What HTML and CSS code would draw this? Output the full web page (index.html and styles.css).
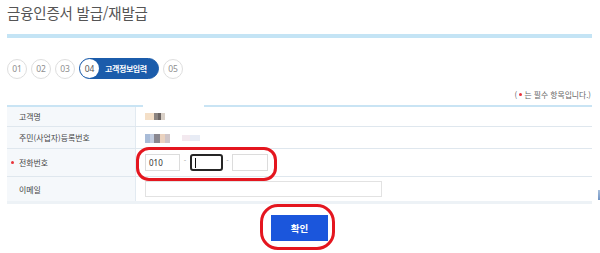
FILE: index.html
```html
<!DOCTYPE html>
<html lang="ko">
<head>
<meta charset="utf-8">
<title>금융인증서 발급/재발급</title>
<link rel="stylesheet" href="styles.css">
</head>
<body>
<div class="page">
  <h1 class="title">금융인증서 발급/재발급</h1>
  <div class="bar"></div>

  <ol class="steps">
    <li class="step">01</li>
    <li class="step">02</li>
    <li class="step">03</li>
    <li class="step current"><span class="num">04</span><span class="name">고객정보입력</span></li>
    <li class="step">05</li>
  </ol>

  <p class="note">( <span class="note-dot"></span> 는 필수 항목입니다.)</p>

  <div class="form">
    <div class="mask"></div>
    <div class="row r1">
      <div class="label">고객명</div>
      <div class="value">
        <span class="blur">
          <i class="px" style="width:9px;background:#f4dfc7"></i><i class="px" style="width:4px;background:#8b8481"></i><i class="px" style="width:3px;background:#6c6563"></i><i class="px" style="width:4px;background:#d9d0c7"></i>
        </span>
      </div>
    </div>
    <div class="row r2">
      <div class="label">주민(사업자)등록번호</div>
      <div class="value">
        <span class="blur tall">
          <i class="px" style="width:5px;background:#a9bcd8"></i><i class="px" style="width:4px;background:#c3cde0"></i><i class="px" style="width:6px;background:#8a878f"></i><i class="px" style="width:5px;background:#ead2bf"></i><i class="px" style="width:5px;background:#cfc5c8"></i>
        </span>
        <span class="blur faint">
          <i class="px" style="width:8px;background:#f2e7ee"></i><i class="px" style="width:10px;background:#e6ebf4"></i>
        </span>
      </div>
    </div>
    <div class="row r3">
      <div class="label"><span class="req"></span>전화번호</div>
      <div class="value">
        <div class="phone">
          <div class="field f1">010</div>
          <span class="dash">-</span>
          <div class="field f2 focus"><span class="caret"></span></div>
          <span class="dash">-</span>
          <div class="field f3"></div>
          <span class="mark phone-mark"></span>
        </div>
      </div>
    </div>
    <div class="row r4">
      <div class="label">이메일</div>
      <div class="value">
        <div class="field email"></div>
      </div>
    </div>
  </div>

  <div class="actions">
    <div class="btn-wrap">
      <button class="btn" type="button">확인</button>
      <span class="mark btn-mark"></span>
    </div>
  </div>
</div>
<span class="edge"></span>
</body>
</html>
```

FILE: styles.css
```css
* { box-sizing: border-box; }
html, body { margin: 0; padding: 0; background: #fff; }
body {
  width: 600px;
  height: 253px;
  overflow: hidden;
  position: relative;
  font-family: "Noto Sans CJK KR", "Noto Sans", sans-serif;
  color: #444;
}
.page { padding: 0 8px 0 7px; }

.title {
  margin: 0;
  padding-top: 3px;
  font-size: 14.5px;
  line-height: 20px;
  font-weight: 400;
  color: #555;
  letter-spacing: -0.2px;
}
.bar {
  margin-top: 11px;
  height: 4px;
  background: #c4e4f5;
}

.steps {
  list-style: none;
  margin: 20px 0 0;
  padding: 0;
  display: flex;
  align-items: center;
  gap: 4px;
  height: 21px;
}
.step {
  width: 20px;
  height: 20px;
  border: 1px solid #dedede;
  border-radius: 50%;
  display: flex;
  align-items: center;
  justify-content: center;
  font-family: "Noto Sans", sans-serif;
  font-size: 8.5px;
  color: #8e8e8e;
  background: #fff;
}
.step.current {
  width: 80px;
  height: 21px;
  border: 1px solid #1b5cab;
  border-radius: 11px;
  background: #1b5cab;
  justify-content: flex-start;
  padding: 0;
}
.step.current .num {
  width: 19px;
  height: 19px;
  border-radius: 50%;
  background: #fff;
  display: flex;
  align-items: center;
  justify-content: center;
  color: #555;
  font-size: 8.5px;
}
.step.current .name {
  margin-left: 6px;
  color: #fff;
  font-family: "Noto Sans CJK KR", sans-serif;
  font-weight: 700;
  font-size: 8px;
  letter-spacing: -0.4px;
}

.note {
  margin: 11px 0 5px;
  text-align: right;
  font-size: 7.8px;
  line-height: 10px;
  color: #666;
  padding-right: 1px;
}
.note-dot {
  display: inline-block;
  width: 3px;
  height: 3px;
  border-radius: 50%;
  background: #e8333b;
  vertical-align: 2px;
}

.form {
  position: relative;
  border-top: 2px solid #c9e4f4;
}
.mask {
  position: absolute;
  left: 136px;
  top: -10px;
  width: 61px;
  height: 12px;
  background: #fff;
}
.row {
  display: grid;
  grid-template-columns: 129px 1fr;
  border-bottom: 1px solid #dfe7ee;
}
.r1 { height: 20px; }
.r2 { height: 22px; }
.r3 { height: 28px; }
.r4 { height: 27px; border-bottom: 3px solid #edf2f6; }
.label {
  background: #f5f8fb;
  border-right: 1px solid #e2eaf1;
  padding-left: 12px;
  display: flex;
  align-items: center;
  font-size: 7.9px;
  color: #444;
}
.req {
  display: inline-block;
  width: 3px;
  height: 3px;
  border-radius: 50%;
  background: #e8333b;
  margin-left: -8.5px;
  margin-right: 5.5px;
}
.value {
  padding-left: 9px;
  display: flex;
  align-items: center;
}

.blur { display: inline-flex; height: 7px; }
.blur.tall { height: 9px; margin-top: 2px; }
.blur.faint { height: 6px; margin-left: 12px; opacity: 0.9; }
.px { display: block; height: 100%; }

.phone {
  position: relative;
  display: flex;
  align-items: center;
}
.field {
  height: 17px;
  border: 1px solid #dcdcdc;
  background: #fff;
  font-family: "Noto Sans", sans-serif;
  font-size: 8px;
  color: #333;
  display: flex;
  align-items: center;
  padding-left: 3px;
}
.f1 { width: 35px; }
.f2 { width: 33px; }
.f3 { width: 36px; }
.field.focus {
  border: 2px solid #262626;
  border-radius: 3px;
  padding-left: 3px;
}
.caret {
  display: block;
  width: 1px;
  height: 10px;
  background: #111;
}
.dash {
  width: 10px;
  text-align: center;
  font-size: 7px;
  color: #999;
  margin-top: -6px;
}
.f2 + .dash { width: 9px; }
.email { width: 237px; height: 16px; border-color: #e2e2e2; }

.mark {
  position: absolute;
  border: 3px solid #e4161f;
  pointer-events: none;
}
.phone-mark {
  left: -9px;
  right: -9px;
  top: -7px;
  bottom: -10px;
  border-radius: 13px;
}

.actions {
  display: flex;
  justify-content: center;
  margin-top: 11px;
}
.btn-wrap { position: relative; }
.btn {
  display: block;
  width: 57px;
  height: 26px;
  border: 0;
  margin: 0;
  padding: 0;
  background: #1b56dc;
  color: #fff;
  font-family: "Noto Sans CJK KR", sans-serif;
  font-weight: 700;
  font-size: 9.5px;
}
.btn-mark {
  left: -11px;
  right: -7px;
  top: -11px;
  bottom: -9px;
  border-radius: 18px;
}

.edge {
  position: absolute;
  left: 598px;
  top: 190px;
  width: 2px;
  height: 10px;
  background: linear-gradient(#a9c0dc, #6f93c4);
}
```
